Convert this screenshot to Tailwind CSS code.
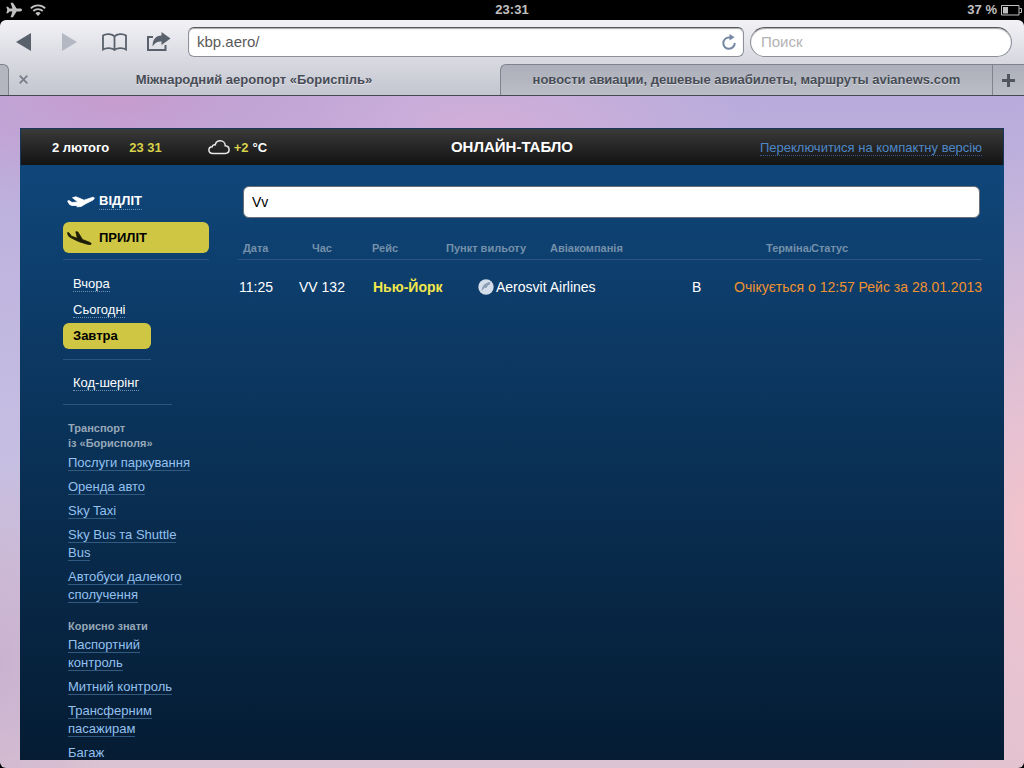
<!DOCTYPE html>
<html lang="uk">
<head>
    <meta charset="UTF-8">
    <meta name="viewport" content="width=device-width, initial-scale=1.0">
    <title>Онлайн-табло</title>
    <script src="https://cdn.jsdelivr.net/npm/@tailwindcss/browser@4"></script>
</head>
<body class="h-screen flex flex-col overflow-hidden bg-black font-['Liberation_Sans',Arial,sans-serif]">
    <!-- Status bar -->
    <div class="h-5 shrink-0 grid grid-cols-3 items-center pl-1.5 pr-0.5 text-[13px] font-bold text-[#c0c0c0]">
        <div class="flex items-center gap-2">
            <svg class="w-4 h-4" viewBox="0 0 16 16" fill="currentColor"><path d="M16 8c0-.9-1-1.400-2-1.400H10.600L7 .8H4.600l1.800 5.800H3.500L2 4.800H.3L1.300 8 .3 11.200H2l1.500-1.800h2.900L4.600 15.200H7l3.600-5.800H14c1 0 2-.5 2-1.400z"/></svg>
            <svg class="w-4 h-4" viewBox="0 0 16 16" fill="none" stroke="currentColor" stroke-width="1.800"><path d="M.8 6.300a10.200 10.200 0 0 1 14.400 0M3.300 9a6.700 6.700 0 0 1 9.400 0"/><path d="M5.300 11.300a3.900 3.900 0 0 1 5.400 0L8 14z" fill="currentColor" stroke="none"/></svg>
        </div>
        <div class="text-center -ml-1">23:31</div>
        <div class="flex items-center justify-end gap-1">
            <span>37 %</span>
            <svg class="w-[21px] h-[11px]" viewBox="0 0 21 11"><path d="M.5.500h17.500v9.500H.5zM18.500 3.500h2v4h-2" fill="none" stroke="#c0c0c0"/><path d="M2 2h5v6.500H2z" fill="#c0c0c0"/></svg>
        </div>
    </div>

    <!-- Browser toolbar -->
    <header class="shrink-0 rounded-t-md bg-linear-to-b from-[#f2f2f6] to-[#c3c5cf] border-b border-[#45484f]">
        <div class="h-[43px] flex items-center pl-4 pr-3">
            <button type="button" aria-label="Назад" class="w-4 h-[18px]"><svg class="w-4 h-[18px]" viewBox="0 0 16 18"><path d="M0 9 15 0v18z" fill="#59616c"/></svg></button>
            <button type="button" aria-label="Вперед" class="w-4 h-[18px] ml-[30px]" disabled><svg class="w-4 h-[18px]" viewBox="0 0 16 18"><path d="M15 9 0 0v18z" fill="#b4b8c2"/></svg></button>
            <button type="button" aria-label="Закладки" class="ml-6"><svg class="w-[25px] h-[18px]" viewBox="0 0 25 18" fill="none" stroke="#59616c" stroke-width="1.800"><path d="M12.500 3.500C10.500.6 4 .3 1 2.500v14c3-2 9.500-1.800 11.500.5 2-2.300 8.500-2.500 11.500-.5v-14C21 .3 14.500.6 12.500 3.500zM12.500 3.500V17"/></svg></button>
            <button type="button" aria-label="Поділитися" class="ml-5"><svg class="w-6 h-5" viewBox="0 0 24 20"><path d="M6 5H1v13h17.500v-5" fill="none" stroke="#59616c" stroke-width="2"/><path d="M14.500 0 23.500 6.500l-9 6.500V9.500C10.500 9.500 8 10.800 5.500 14.500 5.500 7.500 8.500 3.800 14.500 3.500z" fill="#59616c"/></svg></button>
            <div class="relative flex-1 ml-[17px]">
                <input type="text" aria-label="Адреса" value="kbp.aero/" class="w-full h-[30px] rounded-md border border-[#8d9099] border-t-[#55585e] bg-white px-2 text-[15px] text-[#5a5a5a] shadow-[inset_0_1px_1px_#aaa]">
                <button type="button" aria-label="Оновити" class="absolute right-2 top-[7px]"><svg class="w-[14px] h-4" viewBox="0 0 14 16"><path d="M12.700 9A5.700 5.700 0 1 1 7 3.400h2" fill="none" stroke="#7488a3" stroke-width="2"/><path d="M7.500 0v6.500l5-3.200z" fill="#7488a3"/></svg></button>
            </div>
            <input type="search" aria-label="Пошук" placeholder="Поиск" class="w-[262px] h-[30px] ml-1.5 rounded-full border border-[#8d9099] border-t-[#55585e] bg-white px-2.5 text-[15px] placeholder:text-[#b3b3b3] shadow-[inset_0_1px_1px_#aaa]">
        </div>
        <!-- Tabs -->
        <div class="h-8 flex text-[13px] font-bold text-[#474c56]">
            <div class="w-[9px] mt-px rounded-tr-md border-t border-r border-[#80838b] bg-[#b3b6bf]"></div>
            <div class="flex-1 flex items-center pt-px">
                <button type="button" aria-label="Закрити вкладку" class="ml-2.5"><svg class="w-[9px] h-[9px]" viewBox="0 0 9 9"><path d="M.7.7l7.600 7.600M8.300.7.700 8.300" stroke="#7b808a" stroke-width="1.900"/></svg></button>
                <a href="#" class="flex-1 pr-5 text-center [text-shadow:0_1px_0_#ffffff80]">Міжнародний аеропорт «Бориспіль»</a>
            </div>
            <a href="#" class="flex-1 flex items-center justify-center mt-px rounded-tl-md border-t border-l border-[#80838b] bg-linear-to-b from-[#adb0ba] to-[#babdc6] [text-shadow:0_1px_0_#ffffff80]">новости авиации, дешевые авиабилеты, маршруты avianews.com</a>
            <button type="button" aria-label="Нова вкладка" class="w-8 flex items-center justify-center mt-px border-t border-l border-[#80838b] bg-linear-to-b from-[#adb0ba] to-[#babdc6]"><svg class="w-[13px] h-[13px]" viewBox="0 0 13 13"><path d="M6.500 0v13M0 6.500h13" stroke="#50555f" stroke-width="3"/></svg></button>
        </div>
    </header>

    <!-- Page -->
    <main class="flex-1 min-h-0 flex flex-col px-5 pt-8 pb-2 rounded-b-md bg-[radial-gradient(ellipse_300px_120px_at_12%_0%,#c79ccf,transparent),radial-gradient(ellipse_260px_120px_at_47%_5%,#d2aed8,transparent),radial-gradient(ellipse_120px_200px_at_0%_84%,#c9b2cf,transparent),radial-gradient(ellipse_160px_380px_at_100%_64%,#f2c3cc,transparent),linear-gradient(to_bottom,#b9acdc,#c6bfe2_55%,#dcc3d2)]">
        <div class="flex-1 min-h-0 flex flex-col overflow-hidden bg-linear-to-b from-[#10497f] to-[#051c33] text-white">
            <div class="h-[37px] shrink-0 grid grid-cols-3 items-center border border-b-0 border-[#17385a] bg-linear-to-b from-[#3a3a3a] to-[#131313] px-[21px] pt-px text-[13px]">
                <div class="flex items-center pl-2.5 font-bold">
                    <span>2 лютого</span>
                    <span class="ml-5 text-[#d8d14a]">23 31</span>
                    <svg class="w-[22px] h-[15px] ml-[46px] mr-1" viewBox="0 0 22 15" fill="none" stroke="#e8e8e8" stroke-width="1.500"><path d="M5 13.500C2.500 13.500.9 12 .9 10c0-2 1.600-3.300 3.300-3.300.2-1.400 1.600-2.300 3-1.900C7.800 2.300 9.800.8 12.200.8c2.900 0 5 2.200 5 4.900 2.300.2 3.900 1.700 3.900 3.900 0 2.300-1.700 3.900-4 3.900z"/></svg>
                    <span class="text-[#d8d14a]">+2</span>
                    <span class="ml-1">°C</span>
                </div>
                <h1 class="text-center text-[15px] font-bold">ОНЛАЙН-ТАБЛО</h1>
                <div class="text-right whitespace-nowrap"><a href="#" class="border-b border-dotted border-[#35598a] text-[#4d87c7]">Переключитися на компактну версію</a></div>
            </div>

            <div class="flex-1 min-h-0 flex pl-[43px] pr-[22px]">
                <!-- Sidebar -->
                <aside class="w-[146px] shrink-0 pt-[21px] text-[13px]">
                    <nav class="border-b border-[#2a5580] pb-1.5 font-bold">
                        <a href="#" class="h-[31px] flex items-center pl-1 gap-1">
                            <svg class="w-7 h-4" viewBox="0 0 28 16" fill="#fff" stroke="#fff" stroke-width=".8"><path d="M.6 7 2 6.500 5 8.500l6-.5-5.500-4.300L9 2.800l8 3.400 9-3 1.500.8L26 6l-7 3.500-5 3-4.200.3L11 11.500H5l-2.500-1z"/></svg>
                            <span class="leading-4 border-b border-dotted border-[#6d90b3]">ВІДЛІТ</span>
                        </a>
                        <a href="#" class="h-[31px] mt-[5px] flex items-center pl-1 gap-1 rounded-md bg-[#cfc744] text-black">
                            <svg class="w-7 h-4" viewBox="0 0 28 16" fill="#1c1c08" stroke="#1c1c08" stroke-width=".8"><path d="M.6 2.500 2 2.900l2.500 3.300 5.900 2L8.800 1.700l2 .2 4.700 7.600 7.500 3c1.200.6 1.300 1.300 1 1.800-1 .3-3 .2-4.500-.3l-8-2.500-7-3.500C1.500 7 .8 5 .6 2.500z"/></svg>
                            <span>ПРИЛІТ</span>
                        </a>
                    </nav>
                    <nav class="w-[88px] mt-[11px] pb-2.5 border-b border-[#2a5580] leading-[26px]">
                        <a href="#" class="block pl-2.5"><span class="border-b border-dotted border-[#6d90b3]">Вчора</span></a>
                        <a href="#" class="block pl-2.5"><span class="border-b border-dotted border-[#6d90b3]">Сьогодні</span></a>
                        <a href="#" class="block pl-2.5 rounded-md bg-[#cfc744] font-bold text-black">Завтра</a>
                    </nav>
                    <nav class="w-[109px] pt-2.5 pb-2 border-b border-[#2a5580] leading-[26px]">
                        <a href="#" class="block pl-2.5"><span class="border-b border-dotted border-[#6d90b3]">Код-шерінг</span></a>
                    </nav>
                    <div class="pl-[5px] pr-4 leading-[18px] text-[#94c1f0]">
                        <h2 class="mt-4 text-[11px] leading-[15px] font-bold text-[#96a8b8]">Транспорт<br>із «Борисполя»</h2>
                        <ul class="mt-[3px] space-y-1.5 -mr-2">
                            <li><a href="#" class="border-b border-[#315a80]">Послуги паркування</a></li>
                            <li><a href="#" class="border-b border-[#315a80]">Оренда авто</a></li>
                            <li><a href="#" class="border-b border-[#315a80]">Sky Taxi</a></li>
                            <li><a href="#" class="border-b border-[#315a80]">Sky Bus та Shuttle Bus</a></li>
                            <li><a href="#" class="border-b border-[#315a80]">Автобуси далекого сполучення</a></li>
                        </ul>
                        <h2 class="mt-[15px] text-[11px] leading-[15px] font-bold text-[#96a8b8]">Корисно знати</h2>
                        <ul class="mt-0.5 space-y-1.5">
                            <li><a href="#" class="border-b border-[#315a80]">Паспортний контроль</a></li>
                            <li><a href="#" class="border-b border-[#315a80]">Митний контроль</a></li>
                            <li><a href="#" class="border-b border-[#315a80]">Трансферним пасажирам</a></li>
                            <li><a href="#" class="border-b border-[#315a80]">Багаж</a></li>
                        </ul>
                    </div>
                </aside>

                <!-- Flights -->
                <section class="flex-1 min-w-0 ml-[29px] pt-[21px]">
                    <div class="pl-[5px] pr-0.5">
                        <input type="text" aria-label="Пошук рейсу" value="Vv" class="w-full h-8 rounded-md border border-[#6b6f75] bg-white px-2 text-[14px] text-black">
                    </div>
                    <table class="block mt-[21px] whitespace-nowrap">
                        <thead class="block">
                            <tr class="grid grid-cols-[69px_60px_74px_104px_1fr_45px_171px] pl-[5px] border-b border-[#2a5580] text-left text-[11px] leading-[18px] pb-0.5 text-[#7590aa]">
                                <th>Дата</th>
                                <th>Час</th>
                                <th>Рейс</th>
                                <th>Пункт вильоту</th>
                                <th>Авіакомпанія</th>
                                <th class="overflow-hidden">Термінал</th>
                                <th>Статус</th>
                            </tr>
                        </thead>
                        <tbody class="block">
                            <tr class="grid grid-cols-[60px_74px_105px_1fr_42px_248px] items-center mt-[17px] pl-px text-[14px] leading-5">
                                <td>11:25</td>
                                <td>VV 132</td>
                                <td class="font-bold text-[#f2e84a]">Нью-Йорк</td>
                                <td class="flex items-center gap-0.5">
                                    <svg class="w-4 h-4" viewBox="0 0 16 16"><circle cx="8" cy="8" r="7.700" fill="#d3deea"/><path d="M3.500 12C4 7 7 3.500 12.500 3L11.500 6H10L8.700 8.700H6.500z" fill="#8b9db3"/></svg>
                                    <span>Aerosvit Airlines</span>
                                </td>
                                <td>B</td>
                                <td class="text-right text-[#f0922e]">Очікується о 12:57 Рейс за 28.01.2013</td>
                            </tr>
                        </tbody>
                    </table>
                </section>
            </div>
        </div>
    </main>
</body>
</html>
